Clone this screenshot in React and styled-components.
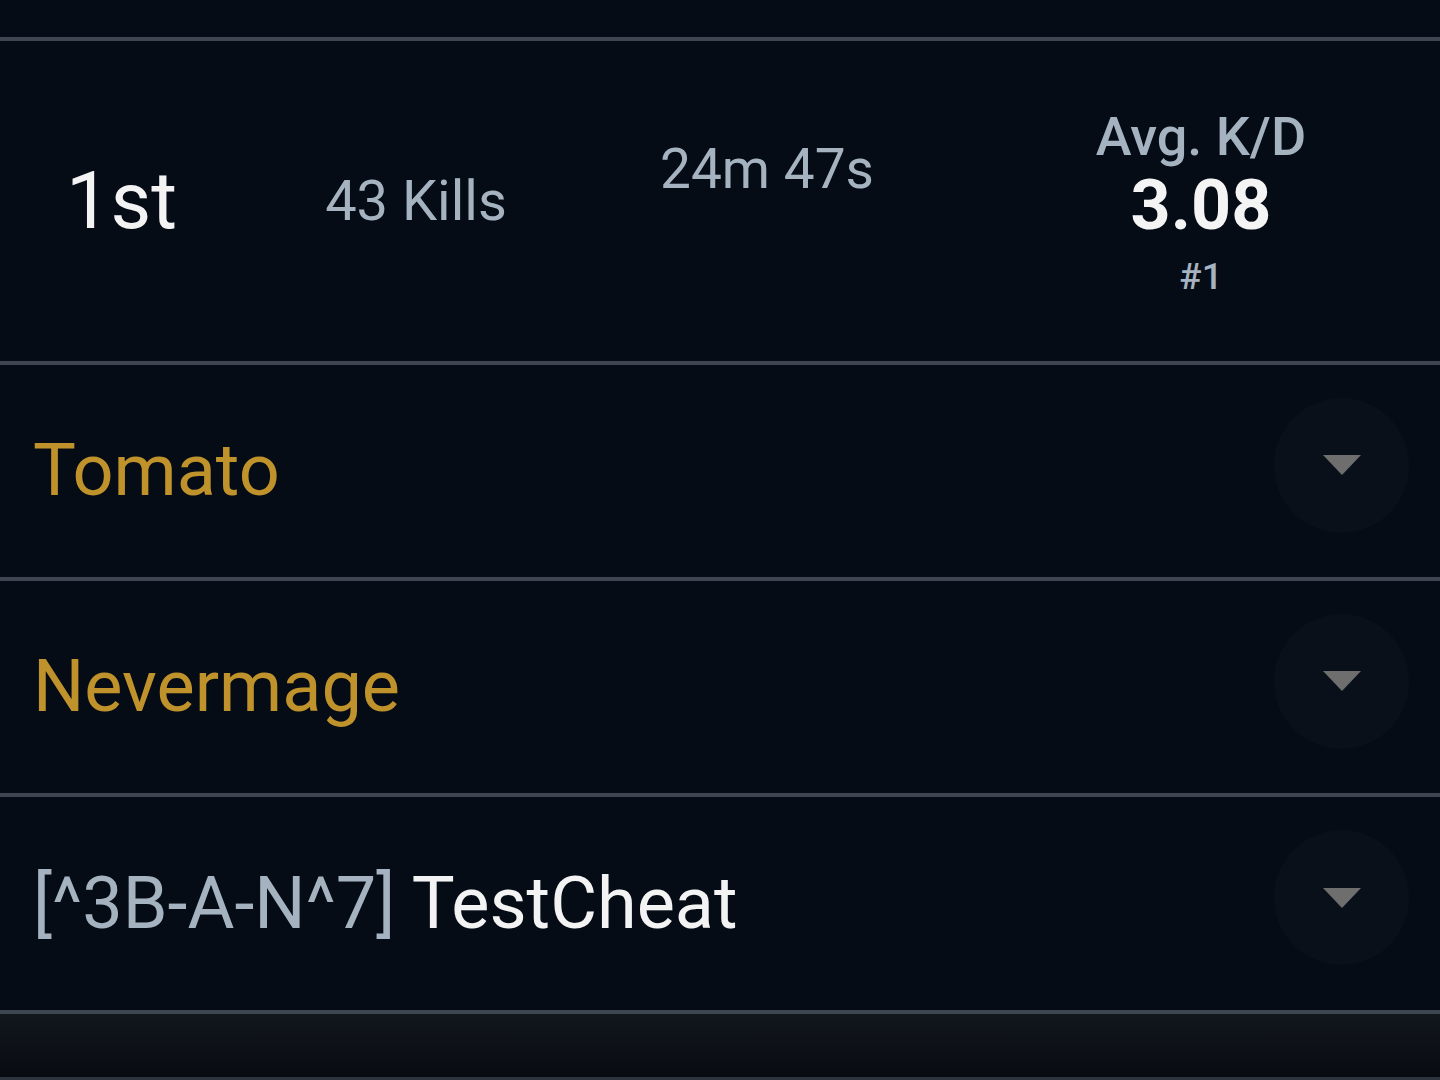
import React from "react";
import styled, { createGlobalStyle } from "styled-components";

const GlobalStyle = createGlobalStyle`
  html, body {
    margin: 0;
    padding: 0;
    background: #060c16;
  }
  body {
    font-family: Roboto, "Liberation Sans", sans-serif;
  }
`;

const Page = styled.div`
  width: 1440px;
  height: 1080px;
  overflow: hidden;
  background: #060c16;
  display: flex;
  flex-direction: column;
`;

const TopBand = styled.div`
  height: 37px;
  border-bottom: 4px solid #3e4751;
`;

const StatsRow = styled.div`
  height: 320px;
  display: grid;
  grid-template-columns: 260px 312px 390px 1fr;
  align-items: center;
  border-bottom: 4px solid #3e4751;
`;

const Stat = styled.div`
  color: ${(p) => p.$color || "#a5b3c1"};
  font-size: ${(p) => p.$size}px;
  line-height: 1;
  text-align: ${(p) => (p.$left ? "left" : "center")};
  padding-left: ${(p) => (p.$left ? "66px" : "0")};
  padding-bottom: ${(p) => p.$lift || 0}px;
`;

const KdBlock = styled.div`
  display: flex;
  flex-direction: column;
  align-items: center;
  padding-top: 2px;
`;

const KdLabel = styled.div`
  color: #a5b3c1;
  font-size: 54px;
  font-weight: 500;
  line-height: 1;
`;

const KdValue = styled.div`
  color: #f4f4f4;
  font-size: 70px;
  font-weight: 700;
  line-height: 1;
  margin-top: 6px;
`;

const KdRank = styled.div`
  color: #a5b3c1;
  font-size: 37px;
  font-weight: 500;
  line-height: 1;
  margin-top: 18px;
`;

const PlayerRow = styled.div`
  height: ${(p) => p.$h || 212}px;
  display: flex;
  align-items: center;
  justify-content: space-between;
  padding: 0 31px 0 33px;
  border-bottom: 4px solid #3e4751;
`;

const PlayerName = styled.div`
  font-size: 72px;
  line-height: 1;
  color: ${(p) => (p.$gold ? "#c0922b" : "#f3f3f3")};
  white-space: nowrap;
`;

const Tag = styled.span`
  color: #a5b3c1;
`;

const ExpandButton = styled.button`
  width: 135px;
  height: 135px;
  border-radius: 50%;
  border: none;
  background: #09101a;
  display: flex;
  align-items: center;
  justify-content: center;
  padding: 0;
  margin-bottom: 12px;
  cursor: pointer;
`;

const Footer = styled.div`
  flex: 1;
  background: linear-gradient(#12161d, #080b12);
  border-bottom: 3px solid #2c343e;
`;

function Caret() {
  return (
    <svg width="38" height="20" viewBox="0 0 38 20">
      <polygon points="0,0 38,0 19,20" fill="#6e6e6e" />
    </svg>
  );
}

const players = [
  { name: "Tomato", gold: true },
  { name: "Nevermage", gold: true },
  { tag: "[^3B-A-N^7]", name: "TestCheat", h: 213 },
];

export default function App() {
  return (
    <Page>
      <GlobalStyle />
      <TopBand />
      <StatsRow>
        <Stat $left $size={79} $color="#f3f3f3">
          1st
        </Stat>
        <Stat $size={56}>43 Kills</Stat>
        <Stat $size={55} $lift={64}>
          24m 47s
        </Stat>
        <KdBlock>
          <KdLabel>Avg. K/D</KdLabel>
          <KdValue>3.08</KdValue>
          <KdRank>#1</KdRank>
        </KdBlock>
      </StatsRow>
      {players.map((p) => (
        <PlayerRow key={p.name} $h={p.h}>
          <PlayerName $gold={p.gold}>
            {p.tag && <Tag>{p.tag} </Tag>}
            {p.name}
          </PlayerName>
          <ExpandButton>
            <Caret />
          </ExpandButton>
        </PlayerRow>
      ))}
      <Footer />
    </Page>
  );
}
